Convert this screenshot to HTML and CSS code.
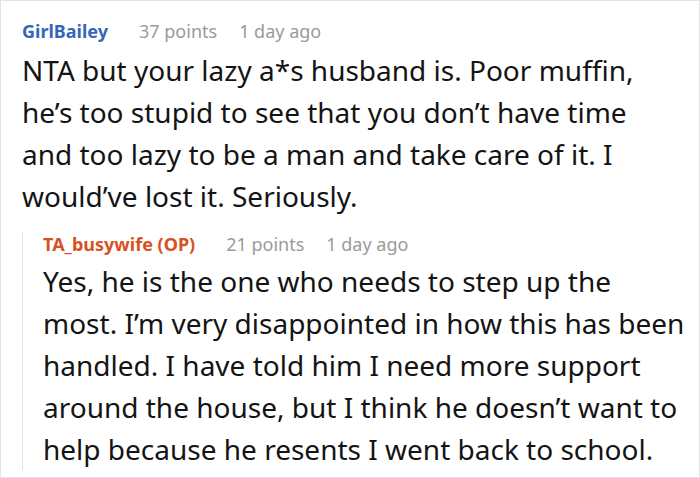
FILE: index.html
```html
<!DOCTYPE html>
<html>
<head>
<meta charset="utf-8">
<link rel="stylesheet" href="styles.css">
</head>
<body>
<div class="frame">
  <div class="comment">
    <div class="meta">
      <span class="author">GirlBailey</span>
      <span class="info">37 points</span>
      <span class="info">1 day ago</span>
    </div>
    <p class="body">NTA but your lazy a*s husband is. Poor muffin, he’s too stupid to see that you don’t have time and too lazy to be a man and take care of it. I would’ve lost it. Seriously.</p>
  </div>
  <div class="reply">
    <div class="meta">
      <span class="author op">TA_busywife (OP)</span>
      <span class="info">21 points</span>
      <span class="info">1 day ago</span>
    </div>
    <p class="body">Yes, he is the one who needs to step up the most. I’m very disappointed in how this has been handled. I have told him I need more support around the house, but I think he doesn’t want to help because he resents I went back to school.</p>
  </div>
</div>
</body>
</html>
```
FILE: styles.css
```css
html, body {
  margin: 0;
  padding: 0;
  background: #fff;
}
.frame {
  box-sizing: border-box;
  width: 700px;
  height: 478px;
  border: 1px solid #e3e3e3;
  padding: 18px 0 0 21px;
  font-family: "Noto Sans", sans-serif;
  color: #141414;
  overflow: hidden;
}
.meta {
  display: flex;
  font-size: 18px;
  line-height: 24px;
}
.author {
  font-weight: bold;
  color: #3567b6;
  margin-right: 31px;
}
.author.op {
  color: #d8511f;
}
.info {
  color: #9a9a9a;
  margin-right: 22px;
}
.body {
  font-size: 28px;
  line-height: 42px;
}
.comment .body {
  margin: 6px 30px 0 0;
}
.reply {
  margin-top: 25px;
  border-left: 1px solid #e3e3e3;
  padding-left: 20px;
}
.reply .meta {
  margin-top: -10px;
}
.reply .body {
  margin: 4px 14px -8px 0;
}
```
